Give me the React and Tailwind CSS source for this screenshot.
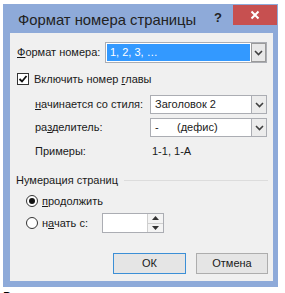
import React from "react";

function Arrow() {
  return (
    <svg width="9" height="6" viewBox="0 0 9 6">
      <path d="M1 1 L4.5 4.5 L8 1" fill="none" stroke="#404040" strokeWidth="1.6" />
    </svg>
  );
}

function Select({ width, children }) {
  return (
    <div className={`flex h-[19px] items-stretch border border-[#abadb3] bg-white ${width}`}>
      <div className="flex flex-1 items-center px-[2px]">
        <div className="whitespace-pre pl-[2px]">{children}</div>
      </div>
      <div className="flex w-[15px] items-center justify-center border-l border-[#abadb3] bg-[#ececec]">
        <Arrow />
      </div>
    </div>
  );
}

export default function App() {
  return (
    <div
      className="h-[293px] w-[285px] overflow-hidden whitespace-nowrap bg-white pl-[3px] pt-[4px] text-[11px] text-[#1a1a1a]"
      style={{ fontFamily: '"Liberation Sans", Arial, sans-serif' }}
    >
      <div className="flex h-[283px] w-[275px] flex-col bg-[#8eaad9] pb-[6px] pl-[7px] pr-[5px]">
        <div className="-ml-[7px] -mr-[5px] flex h-[29px] shrink-0 items-start">
          <div className="ml-[15px] mt-[6px] text-[14.8px] leading-[20px] text-[#222]">
            Формат номера страницы
          </div>
          <div className="ml-auto mt-[6px] text-[13px] font-bold leading-[16px] text-[#222]">?</div>
          <div className="ml-[11px] mr-[1px] mt-[1px] flex h-[20px] w-[44px] items-center justify-center bg-[#c75050]">
            <svg width="10" height="10" viewBox="0 0 10 10">
              <path d="M1.5 1.5 L8.5 8.5 M8.5 1.5 L1.5 8.5" stroke="white" strokeWidth="2" />
            </svg>
          </div>
        </div>
        <div className="flex flex-1 flex-col bg-[#f0f0f0] pl-[7px]">
          <div className="mt-[9px] flex h-[21px] items-center">
            <div className="w-[88px]">
              <span className="underline">Ф</span>ормат номера:
            </div>
            <div className="flex h-[21px] w-[162px] items-stretch border border-[#abadb3] bg-white">
              <div className="flex flex-1 items-center p-[1px]">
                <div className="flex h-full w-full items-center bg-[#3399ff] pl-[3px] text-white">
                  1, 2, 3, …
                </div>
              </div>
              <div className="flex w-[15px] items-center justify-center border border-[#9a9a9a] bg-[#e8e8e8]">
                <Arrow />
              </div>
            </div>
          </div>
          <div className="mt-[9px] flex h-[14px] items-center">
            <div className="flex h-[12px] w-[12px] items-center justify-center border border-[#333] bg-white">
              <svg width="10" height="10" viewBox="0 0 10 10">
                <path d="M1.5 5 L4 7.5 L8.5 2" fill="none" stroke="#111" strokeWidth="1.8" />
              </svg>
            </div>
            <div className="ml-[5px]">
              Включить номер <span className="underline">г</span>лавы
            </div>
          </div>
          <div className="mt-[9px] flex h-[19px] items-center pl-[18px]">
            <div className="w-[115px]">
              <span className="underline">н</span>ачинается со стиля:
            </div>
            <Select width="w-[117px]">Заголовок 2</Select>
          </div>
          <div className="mt-[4px] flex h-[19px] items-center pl-[18px]">
            <div className="w-[115px]">
              ра<span className="underline">з</span>делитель:
            </div>
            <Select width="w-[117px]">{"-      (дефис)"}</Select>
          </div>
          <div className="mt-[7px] flex h-[14px] items-center pl-[18px]">
            <div className="w-[117px]">Примеры:</div>
            <div>1-1, 1-A</div>
          </div>
          <div className="mt-[15px] flex h-[14px] items-center pr-[5px]">
            <div className="-ml-[1px]">Нумерация страниц</div>
            <div className="ml-[6px] h-px flex-1 bg-[#dcdcdc]" />
          </div>
          <div className="mt-[7px] flex h-[14px] items-center pl-[9px]">
            <div className="flex h-[12px] w-[12px] items-center justify-center rounded-full border border-[#333] bg-white">
              <div className="h-[6px] w-[6px] rounded-full bg-[#111]" />
            </div>
            <div className="ml-[4px]">
              <span className="underline">п</span>родолжить
            </div>
          </div>
          <div className="mt-[5px] flex h-[20px] items-center pl-[9px]">
            <div className="flex h-[12px] w-[12px] items-center justify-center rounded-full border border-[#333] bg-white" />
            <div className="ml-[4px] w-[60px]">
              н<span className="underline">а</span>чать с:
            </div>
            <div className="flex h-[20px] w-[62px] border border-[#abadb3] bg-white">
              <div className="flex-1" />
              <div className="flex w-[16px] flex-col border-l border-[#cfcfcf] bg-[#f4f4f4]">
                <div className="flex flex-1 items-center justify-center border-b border-[#cfcfcf]">
                  <svg width="7" height="4" viewBox="0 0 7 4">
                    <path d="M0 4 L3.5 0 L7 4 Z" fill="#333" />
                  </svg>
                </div>
                <div className="flex flex-1 items-center justify-center">
                  <svg width="7" height="4" viewBox="0 0 7 4">
                    <path d="M0 0 L3.5 4 L7 0 Z" fill="#333" />
                  </svg>
                </div>
              </div>
            </div>
          </div>
          <div className="mt-[20px] flex h-[21px] justify-end gap-[10px] pr-[5px]">
            <div className="flex w-[73px] items-center justify-center border border-[#3c8fd6] bg-[#e5e5e5]">
              ОК
            </div>
            <div className="flex w-[72px] items-center justify-center border border-[#adadad] bg-[#e5e5e5]">
              Отмена
            </div>
          </div>
        </div>
      </div>
      <div className="mt-[3px] text-[12px] leading-[14px] text-black">Рисунок</div>
    </div>
  );
}
